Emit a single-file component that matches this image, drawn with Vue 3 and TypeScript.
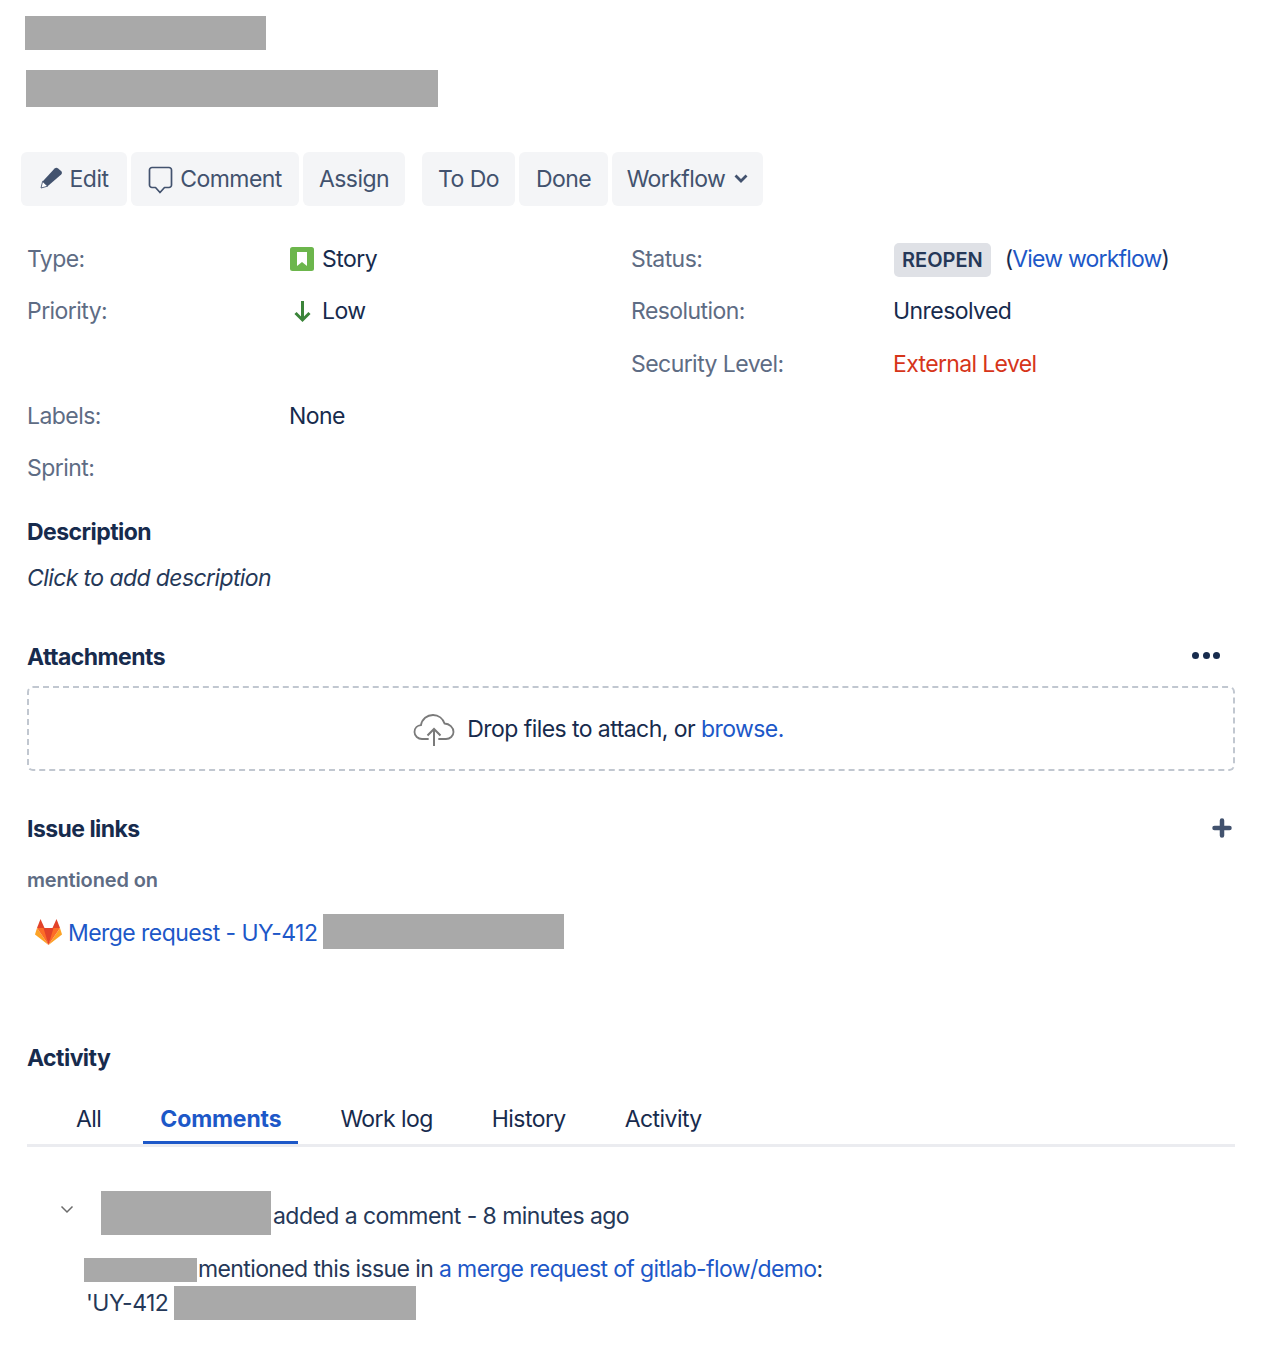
<script setup lang="ts">
const groupOne = ['Assign']
const tabs = ['All', 'Comments', 'Work log', 'History', 'Activity']
</script>

<template>
  <div class="page">
    <div class="redact r1"></div>
    <div class="redact r2"></div>

    <div class="toolbar">
      <button class="btn b-edit">
        <svg class="ic-edit" width="23" height="23" viewBox="0 0 23 23"><path d="M1 22l1.600-6.600L14.600 2.600c1-1 2.400-1.100 3.500-.2l3 2.600c1.100 1 1.100 2.500.1 3.600L7.600 20.200z" fill="#42526e"/><path d="M1 22l1.600-6.600 5 4.800z" fill="#fff" stroke="#42526e" stroke-width=".8"/></svg>
        Edit
      </button>
      <button class="btn b-comment">
        <svg class="ic-comment" width="25" height="28" viewBox="0 0 25 28"><path d="M4 1.500h17a2.500 2.500 0 0 1 2.500 2.500v15a2.500 2.500 0 0 1-2.500 2.500h-4.500L12 26.500l-4.500-5H4A2.500 2.500 0 0 1 1.500 19V4A2.500 2.500 0 0 1 4 1.500z" fill="none" stroke="#42526e" stroke-width="1.700" stroke-linejoin="round"/></svg>
        Comment
      </button>
      <button v-for="b in groupOne" :key="b" class="btn b-assign">{{ b }}</button>
      <button class="btn b-todo">To Do</button>
      <button class="btn b-done">Done</button>
      <button class="btn b-wf">
        Workflow
        <svg width="14" height="10" viewBox="0 0 14 10"><path d="M1.500 1.500L7 7l5.500-5.500" fill="none" stroke="#42526e" stroke-width="2.800"/></svg>
      </button>
    </div>

    <div class="fields">
      <div class="label">Type:</div>
      <div class="val">
        <svg class="ic" width="24" height="24" viewBox="0 0 24 24"><rect width="24" height="24" rx="2.500" fill="#6cb64c"/><path d="M7 5h10v14l-5-4-5 4z" fill="#fff"/></svg>
        Story
      </div>
      <div class="label">Status:</div>
      <div class="val">
        <span class="lozenge">REOPEN</span>
        <span class="wf">(<a>View workflow</a>)</span>
      </div>

      <div class="label">Priority:</div>
      <div class="val">
        <svg class="ic" width="24" height="24" viewBox="0 0 24 24"><path d="M12.500 2v19M5.500 14l7 7 7-7" fill="none" stroke="#3b8439" stroke-width="3"/></svg>
        Low
      </div>
      <div class="label">Resolution:</div>
      <div class="val">Unresolved</div>

      <div></div>
      <div></div>
      <div class="label">Security Level:</div>
      <div class="val red">External Level</div>

      <div class="label">Labels:</div>
      <div class="val">None</div>
      <div></div>
      <div></div>

      <div class="label">Sprint:</div>
      <div class="val"></div>
      <div></div>
      <div></div>
    </div>

    <h2 class="h-desc">Description</h2>
    <p class="desc">Click to add description</p>

    <div class="head h-att">
      <h2>Attachments</h2>
      <span class="dots"><i></i><i></i><i></i></span>
    </div>
    <div class="drop">
      <svg width="42" height="34" viewBox="0 0 42 34"><path d="M15 26H9c-4 0-7.500-3-7.500-7s3-6.500 6.500-6.800C9 6 14 2 20 2c5.500 0 10 3.500 11.500 8.500 5 .2 9 3.800 9 8.500 0 4-3.500 7-7.500 7h-7" fill="none" stroke="#7a7a7a" stroke-width="1.800" stroke-linecap="round"/><path d="M21 33V16M14.500 22.500L21 16l6.500 6.500" fill="none" stroke="#7a7a7a" stroke-width="2"/></svg>
      <span>Drop files to attach, or <a>browse.</a></span>
    </div>

    <div class="head h-links">
      <h2>Issue links</h2>
      <svg width="20" height="20" viewBox="0 0 20 20"><path d="M10 2.500v15M2.500 10h15" stroke="#42526e" stroke-width="4.500" stroke-linecap="round"/></svg>
    </div>
    <div class="mentioned">mentioned on</div>
    <div class="link-row">
      <svg class="fox" width="29" height="27" viewBox="0 0 29 27">
        <path d="M14.500 26L1 15.500 3 9z" fill="#fca326"/>
        <path d="M14.500 26L28 15.500 26 9z" fill="#fca326"/>
        <path d="M14.500 26L3 9h8z" fill="#fc6d26"/>
        <path d="M14.500 26L26 9h-8z" fill="#fc6d26"/>
        <path d="M14.500 26L9.500 9h10z" fill="#e24329"/>
        <path d="M3 9L6.500 0l4 9z" fill="#e24329"/>
        <path d="M26 9L22.500 0l-4 9z" fill="#e24329"/>
      </svg>
      <a>Merge request - UY-412</a>
      <span class="redact r3"></span>
    </div>

    <h2 class="h-act">Activity</h2>
    <div class="tabs">
      <span v-for="t in tabs" :key="t" class="tab" :class="{ on: t === 'Comments' }">{{ t }}</span>
    </div>

    <div class="comment-head">
      <svg class="chev" width="14" height="9" viewBox="0 0 14 9"><path d="M1.500 1.500L7 7l5.500-5.500" fill="none" stroke="#6b6b6b" stroke-width="1.500"/></svg>
      <span class="redact r4"></span>
      <span class="added">added a comment - 8 minutes ago</span>
    </div>
    <div class="body-one">
      <span class="redact r5"></span>
      <span class="mention">mentioned this issue in <a>a merge request of gitlab-flow/demo</a>:</span>
    </div>
    <div class="body-two">
      <span>'UY-412</span>
      <span class="redact r6"></span>
    </div>
  </div>
</template>

<style>
html, body { margin: 0; background: #fff; }
</style>

<style scoped>
.page {
  width: 1269px;
  height: 1350px;
  box-sizing: border-box;
  padding: 16px 34px 0 27px;
  overflow: hidden;
  font-family: Inter, "Liberation Sans", sans-serif;
  font-size: 23px;
  letter-spacing: -0.56px;
  color: #172b4d;
  display: flex;
  flex-direction: column;
}
a { color: #1d58c8; }
h2 { margin: 0; font-size: 23px; font-weight: 700; letter-spacing: -0.55px; line-height: 30px; color: #172b4d; }
.redact { display: block; background: #a9a9a9; flex: none; }
.r1 { width: 241px; height: 34px; margin-left: -2px; }
.r2 { width: 412px; height: 37px; margin: 20px 0 0 -1px; }
.toolbar { display: flex; margin: 45px 0 0 -6px; gap: 4px; }
.btn {
  height: 54px;
  border: 0;
  padding: 0;
  border-radius: 6px;
  background: #f4f5f7;
  color: #42526e;
  font: inherit;
  letter-spacing: inherit;
  display: flex;
  align-items: center;
  justify-content: center;
  gap: 7px;
}
.b-edit { width: 106px; }
.ic-edit { margin-top: -4px; }
.b-comment { width: 168px; }
.ic-comment { margin-top: 1px; }
.b-assign { width: 102px; margin-right: 13px; }
.b-todo { width: 93px; }
.b-done { width: 89px; }
.b-wf { width: 151px; gap: 9px; }
.fields {
  display: grid;
  grid-template-columns: 262px 342px 262px 1fr;
  grid-auto-rows: 52.250px;
  margin-top: 27px;
  align-items: center;
}
.label { color: #5e6c84; }
.val { display: flex; align-items: center; gap: 8px; }
.ic { margin-left: 1px; }
.red { color: #d6351a; letter-spacing: -0.65px; }
.lozenge {
  background: #dfe1e6;
  color: #253858;
  font-size: 20px;
  font-weight: 600;
  letter-spacing: 0;
  border-radius: 5px;
  padding: 0 8px;
  height: 34px;
  line-height: 34px;
  margin: 1px 6px 0 1px;
}
.wf { letter-spacing: -0.82px; }
.h-desc { margin-top: 23px; }
.desc { margin: 16px 0 0; font-style: italic; line-height: 30px; color: #253858; letter-spacing: -0.6px; }
.head { display: flex; justify-content: space-between; align-items: center; }
.h-att { margin-top: 49px; }
.dots { display: flex; gap: 3.500px; margin: -4px 15px 0 0; }
.dots i { width: 7px; height: 7px; border-radius: 50%; background: #172b4d; }
.drop {
  margin-top: 14px;
  height: 85px;
  box-sizing: border-box;
  border: 2px dashed #c1c7d0;
  border-radius: 6px;
  display: flex;
  align-items: center;
  justify-content: center;
  gap: 12px;
  padding-right: 65px;
}
.drop svg { margin-top: 2px; }
.h-links { margin-top: 43px; }
.h-links svg { margin: -2px 3px 0 0; }
.mentioned { margin-top: 21px; font-size: 20px; font-weight: 600; line-height: 30px; letter-spacing: -0.15px; color: #5e6c84; }
.link-row { display: flex; align-items: center; margin-top: 20px; height: 36px; }
.fox { margin-left: 7px; margin-right: 5px; margin-top: -2px; }
.r3 { width: 241px; height: 35px; margin: -3px 0 0 6px; }
.h-act { margin-top: 92px; }
.tabs {
  display: flex;
  margin-top: 25px;
  height: 46px;
  padding-left: 32px;
  border-bottom: 3px solid #ebecf0;
  box-sizing: content-box;
}
.tab { padding: 0 17px; height: 46px; line-height: 42px; margin-right: 25px; color: #172b4d; }
.tab:last-child { margin-right: 0; }
.tab.on { color: #1d58c8; font-weight: 700; letter-spacing: -0.15px; border-bottom: 3px solid #1d58c8; box-sizing: border-box; }
.comment-head { display: flex; align-items: center; margin-top: 44px; height: 44px; color: #253858; }
.chev { margin: -8px 0 0 33px; }
.r4 { width: 170px; height: 44px; margin: 0 2px 0 27px; }
.added { padding-top: 5px; }
.body-one { display: flex; align-items: center; margin: 22px 0 0 57px; height: 26px; color: #253858; }
.r5 { width: 113px; height: 24px; margin-right: 1px; }
.mention { padding-bottom: 2px; letter-spacing: -0.62px; }
.body-two { display: flex; align-items: center; margin: 3px 0 0 59px; height: 34px; color: #253858; }
.r6 { width: 242px; height: 34px; margin-left: 6px; }
</style>
